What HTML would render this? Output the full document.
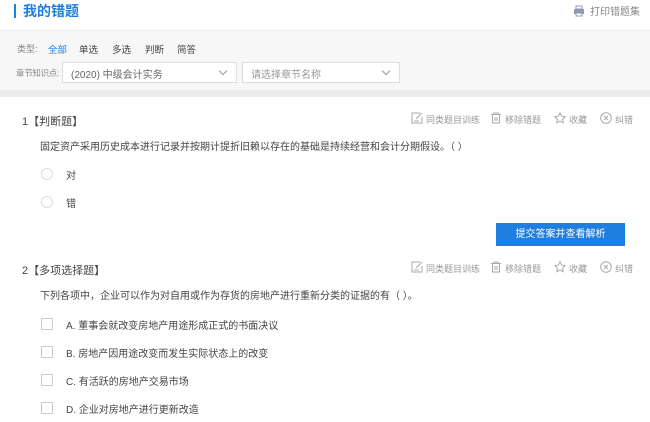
<!DOCTYPE html>
<html><head><meta charset="utf-8"><style>
*{margin:0;padding:0;box-sizing:border-box}
body{width:650px;height:422px;overflow:hidden;background:#fff;font-family:"Liberation Sans","Noto Sans CJK SC",sans-serif;position:relative;color:#444}
.a{position:absolute;white-space:nowrap}
.f{font-size:10px}
.g{color:#888}
.sel{position:absolute;height:21px;border:1px solid #ddd;background:#fff;font-size:10px;color:#666;padding:3px 0 0 8px}
.sel:after{content:"";position:absolute;right:10px;top:5px;width:5px;height:5px;border-right:1px solid #999;border-bottom:1px solid #999;transform:rotate(45deg)}
.rad{position:absolute;width:12px;height:12px;border:1px solid #ddd;border-radius:50%}
.chk{position:absolute;width:12px;height:12px;border:1px solid #ccc}
.act{position:absolute;font-size:9px;color:#999;white-space:nowrap}
.act svg{position:absolute;left:-15px;top:-1px}
</style></head><body>
<div class="a" style="left:14px;top:4px;width:2px;height:14px;background:#1e7fe0"></div>
<div class="a" style="left:23px;top:1px;font-size:14px;font-weight:bold;color:#1e7fe0">我的错题</div>
<svg class="a" style="left:573px;top:5px" width="12" height="12" viewBox="0 0 12 12"><rect x="3" y="1" width="6" height="3" fill="none" stroke="#8a9bb0"/><rect x="1" y="4" width="10" height="5" fill="#8a9bb0"/><rect x="3" y="8" width="6" height="3" fill="#fff" stroke="#8a9bb0"/></svg>
<div class="a g" style="left:590px;top:3px;font-size:10px">打印错题集</div>
<div class="a" style="left:0;top:30px;width:650px;height:61px;background:#f7f7f7;border-top:1px solid #eee"></div>
<div class="a" style="left:0;top:90px;width:650px;height:7px;background:#ececec"></div>
<div class="a g" style="left:17px;top:42px;font-size:9px">类型:</div>
<div class="a" style="left:48px;top:42px;font-size:9.5px;color:#1e7fe0">全部</div>
<div class="a" style="left:79px;top:42px;font-size:9.5px">单选</div>
<div class="a" style="left:112px;top:42px;font-size:9.5px">多选</div>
<div class="a" style="left:145px;top:42px;font-size:9.5px">判断</div>
<div class="a" style="left:177px;top:42px;font-size:9.5px">简答</div>
<div class="a g" style="left:16px;top:67px;font-size:8.5px;letter-spacing:-0.3px">章节知识点:</div>
<div class="sel" style="left:62px;top:62px;width:175px">(2020) 中级会计实务</div>
<div class="sel" style="left:242px;top:62px;width:158px;color:#999">请选择章节名称</div>

<div class="a" style="left:22px;top:113px;font-size:11px">1【判断题】</div>
<div class="a f" style="left:40px;top:138px">固定资产采用历史成本进行记录并按期计提折旧赖以存在的基础是持续经营和会计分期假设。（ ）</div>
<div class="rad" style="left:41px;top:168px"></div><div class="a f" style="left:66px;top:167px">对</div>
<div class="rad" style="left:41px;top:196px"></div><div class="a f" style="left:66px;top:195px">错</div>
<div class="a" style="left:496px;top:223px;width:129px;height:23px;background:#1e7fe0;color:#fff;font-size:10px;text-align:center;line-height:23px">提交答案并查看解析</div>

<div class="a" style="left:22px;top:262px;font-size:11px">2【多项选择题】</div>
<div class="a f" style="left:40px;top:287px">下列各项中，企业可以作为对自用或作为存货的房地产进行重新分类的证据的有（ ）。</div>
<div class="chk" style="left:41px;top:318px"></div><div class="a f" style="left:66px;top:317px">A. 董事会就改变房地产用途形成正式的书面决议</div>
<div class="chk" style="left:41px;top:346px"></div><div class="a f" style="left:66px;top:345px">B. 房地产因用途改变而发生实际状态上的改变</div>
<div class="chk" style="left:41px;top:374px"></div><div class="a f" style="left:66px;top:373px">C. 有活跃的房地产交易市场</div>
<div class="chk" style="left:41px;top:402px"></div><div class="a f" style="left:66px;top:401px">D. 企业对房地产进行更新改造</div>

<div style="position:absolute;left:0;top:113px;width:650px">
<div class="act" style="left:426px;top:0">同类题目训练<svg width="12" height="12" viewBox="0 0 12 12"><path d="M9 1H1v10h10V5M5 7l6-6M3 9h5" fill="none" stroke="#aaa"/></svg></div>
<div class="act" style="left:505px;top:0">移除错题<svg width="12" height="12" viewBox="0 0 12 12"><path d="M1 2.5h10M4 2.5V1h4v1.5M2.5 2.5V11h7V2.5M5 5v4M7 5v4" fill="none" stroke="#aaa"/></svg></div>
<div class="act" style="left:569px;top:0">收藏<svg width="12" height="12" viewBox="0 0 12 12"><path d="M6 .8l1.6 3.3 3.6.5-2.6 2.5.6 3.6L6 9 2.8 10.7l.6-3.6L.8 4.6l3.6-.5z" fill="none" stroke="#aaa"/></svg></div>
<div class="act" style="left:615px;top:0">纠错<svg width="12" height="12" viewBox="0 0 12 12"><circle cx="6" cy="6" r="5.3" fill="none" stroke="#aaa"/><path d="M4 4l4 4M8 4l-4 4" stroke="#aaa"/></svg></div>
</div>
<div style="position:absolute;left:0;top:262px;width:650px">
<div class="act" style="left:426px;top:0">同类题目训练<svg width="12" height="12" viewBox="0 0 12 12"><path d="M9 1H1v10h10V5M5 7l6-6M3 9h5" fill="none" stroke="#aaa"/></svg></div>
<div class="act" style="left:505px;top:0">移除错题<svg width="12" height="12" viewBox="0 0 12 12"><path d="M1 2.5h10M4 2.5V1h4v1.5M2.5 2.5V11h7V2.5M5 5v4M7 5v4" fill="none" stroke="#aaa"/></svg></div>
<div class="act" style="left:569px;top:0">收藏<svg width="12" height="12" viewBox="0 0 12 12"><path d="M6 .8l1.6 3.3 3.6.5-2.6 2.5.6 3.6L6 9 2.8 10.7l.6-3.6L.8 4.6l3.6-.5z" fill="none" stroke="#aaa"/></svg></div>
<div class="act" style="left:615px;top:0">纠错<svg width="12" height="12" viewBox="0 0 12 12"><circle cx="6" cy="6" r="5.3" fill="none" stroke="#aaa"/><path d="M4 4l4 4M8 4l-4 4" stroke="#aaa"/></svg></div>
</div>
</body></html>
